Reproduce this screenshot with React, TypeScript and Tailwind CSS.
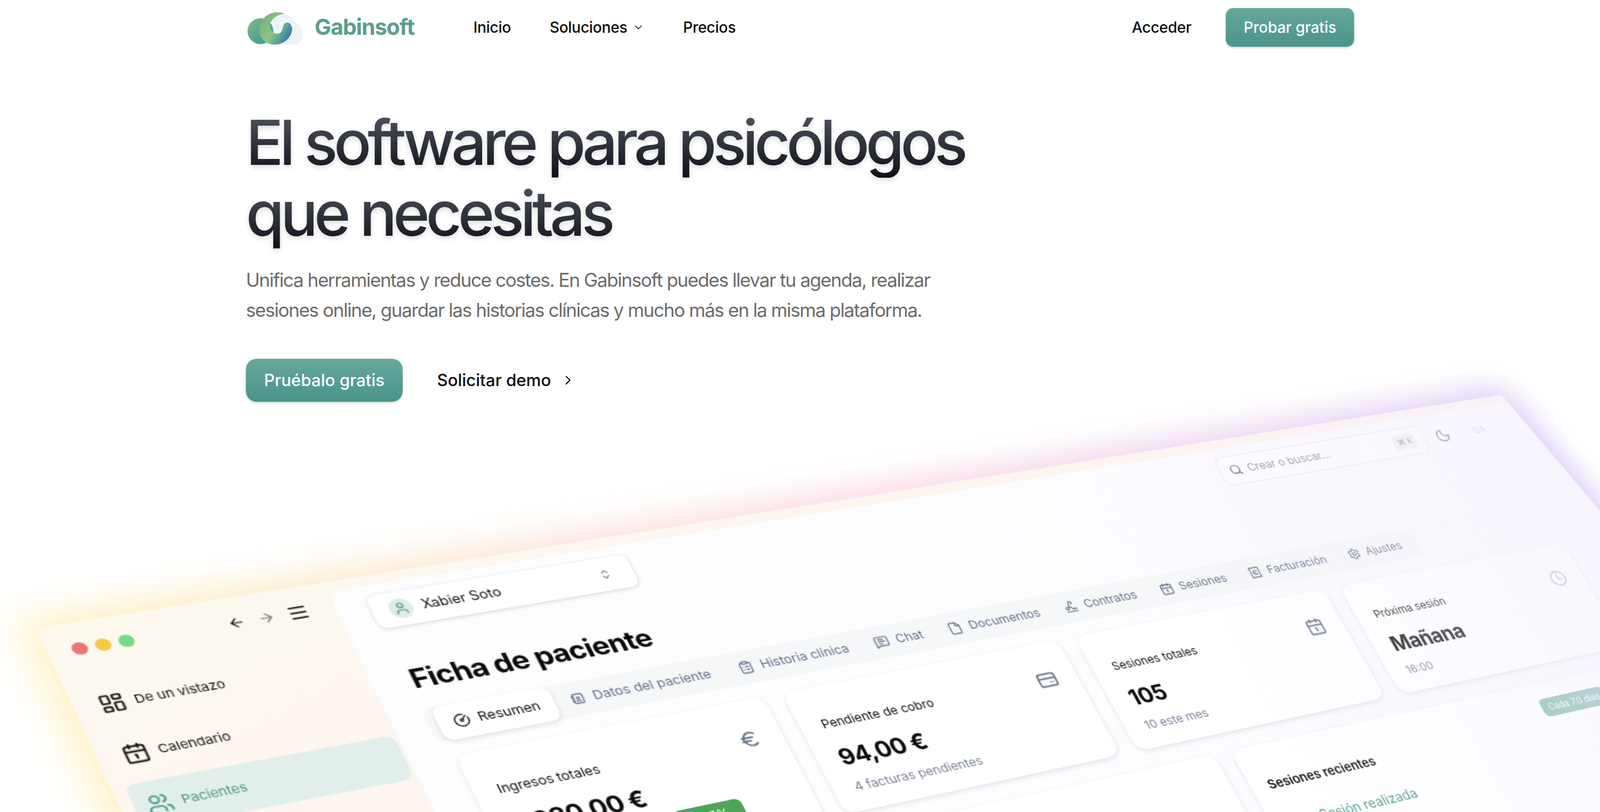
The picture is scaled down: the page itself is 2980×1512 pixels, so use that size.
import { ReactNode } from "react";
import {
  ArrowLeft,
  ArrowRight,
  Calendar1,
  ChevronDown,
  ChevronRight,
  ChevronsUpDown,
  CircleGauge,
  ClipboardList,
  Clock,
  Euro,
  File,
  LayoutDashboard,
  Menu,
  MessageSquareText,
  Moon,
  ReceiptEuro,
  Search,
  Settings,
  Signature,
  User,
  Users,
} from "lucide-react";
import { TbAddressBook } from "react-icons/tb";

const FONT = "font-['Inter','Liberation_Sans',sans-serif]";

// size of the app window before it gets tilted
const WIN_W = 1440;
const WIN_H = 376;

// where the corners of that rectangle land on the page
const CORNERS = [
  [68, 1170],
  [2796, 735],
  [3126, 1282],
  [408, 1900],
];

function perspectiveMatrix(w: number, h: number, pts: number[][]) {
  const [[x0, y0], [x1, y1], [x2, y2], [x3, y3]] = pts;
  const dx1 = x1 - x2;
  const dx2 = x3 - x2;
  const sx = x0 - x1 + x2 - x3;
  const dy1 = y1 - y2;
  const dy2 = y3 - y2;
  const sy = y0 - y1 + y2 - y3;
  const den = dx1 * dy2 - dx2 * dy1;
  const g = (sx * dy2 - dx2 * sy) / den;
  const k = (dx1 * sy - sx * dy1) / den;
  const a = x1 - x0 + g * x1;
  const b = x3 - x0 + k * x3;
  const d = y1 - y0 + g * y1;
  const e = y3 - y0 + k * y3;
  return `matrix3d(${a / w},${d / w},0,${g / w},${b / h},${e / h},0,${k / h},0,0,1,0,${x0},${y0},0,1)`;
}

function Logo() {
  return (
    <svg viewBox="0 0 130 80" className="h-[80px] w-[130px]">
      <defs>
        <linearGradient id="lobe" x1="0" y1="0" x2="1" y2="1">
          <stop offset="0" stopColor="#86b67f" />
          <stop offset="1" stopColor="#2f9aa3" />
        </linearGradient>
        <linearGradient id="swirl" x1="0" y1="0" x2="1" y2="0.6">
          <stop offset="0" stopColor="#6cab84" />
          <stop offset="0.55" stopColor="#93c486" />
          <stop offset="0.8" stopColor="#5aa596" />
          <stop offset="1" stopColor="#3c78b4" />
        </linearGradient>
      </defs>
      <path
        d="M30 72 C14 70 12 30 32 22 L80 14 C92 18 100 26 102 33 C118 36 120 70 100 72 Z"
        fill="#eef4f5"
      />
      <circle cx="35" cy="47" r="24" fill="url(#lobe)" />
      <path
        d="M80 14 C58 6 33 20 33 45 C33 62 47 72 62 72 C78 72 93 60 94 43 C94 33 86 28 80 33 C75 38 78 46 72 50 C65 55 52 49 53 36 C54 24 66 17 80 14 Z"
        fill="url(#swirl)"
      />
    </svg>
  );
}

// card with a band on top and two dots, the picture has no exact match in lucide
function BillingIcon() {
  return (
    <svg
      viewBox="0 0 24 24"
      fill="none"
      stroke="currentColor"
      strokeWidth="2"
      strokeLinecap="round"
      className="h-[20px] w-[20px]"
    >
      <rect x="2" y="4" width="20" height="16" rx="3" />
      <path d="M2 10h20M15 15h.01M18 15h.01" />
    </svg>
  );
}

function HeroLine({ children }: { children: ReactNode }) {
  return (
    <span className="block w-fit bg-gradient-to-b from-[#565c68] to-[#0f1118] bg-clip-text pr-2 text-transparent">
      {children}
    </span>
  );
}

function SideItem({
  icon,
  label,
  active,
}: {
  icon: ReactNode;
  label: string;
  active?: boolean;
}) {
  return (
    <div
      className={`flex h-[44px] items-center gap-[7px] rounded-lg pl-[9px] text-[11px] ${
        active ? "bg-[#e2eeea] text-[#4f9a8b]" : "text-[#111]"
      }`}
    >
      {icon}
      <span>{label}</span>
    </div>
  );
}

function Tab({ icon, label }: { icon: ReactNode; label: string }) {
  return (
    <div className="flex items-center gap-[7px] px-[12.75px] text-[12.1px] text-[#66728a]">
      {icon}
      <span>{label}</span>
    </div>
  );
}

function StatCard({
  title,
  value,
  sub,
  icon,
  badge,
}: {
  title: string;
  value: string;
  sub: string;
  icon: ReactNode;
  badge?: string;
}) {
  return (
    <div className="relative h-[130px] rounded-xl bg-white px-[20px] pt-[31px] shadow-[0_2px_5px_rgba(40,40,70,0.12)]">
      <div className="absolute top-[29px] right-[20px] text-[#66728a]">{icon}</div>
      <div className="text-[11.7px] leading-[16px] text-[#111]">{title}</div>
      <div className="mt-[14px] text-[22.5px] leading-[28px] font-bold tracking-tight text-[#0c0c0c]">
        {value}
      </div>
      <div className="mt-[8px] text-[12px] leading-[18px] text-[#7b8598]">{sub}</div>
      {badge && (
        <span className="absolute top-[93px] right-[64px] rounded-md bg-[#4ea45b] px-[14px] py-[3px] text-[11px] font-medium text-white">
          {badge}
        </span>
      )}
    </div>
  );
}

function AppWindow() {
  const tabIcon = "h-[14px] w-[14px]";
  return (
    <div
      className="absolute top-0 left-0 h-[520px] w-[1549px] origin-top-left"
      style={{ transform: perspectiveMatrix(WIN_W, WIN_H, CORNERS) }}
    >
      {/* glow behind the window */}
      <div className="absolute -inset-[9px] opacity-60 blur-[18px]">
        <div className="h-full w-full bg-gradient-to-r from-[#ffe68f] via-[#f7b9d2] to-[#b9a6f5] [clip-path:polygon(0_0,1458px_0,1567px_100%,0_100%)]" />
      </div>

      {/* the right side of the panel runs out at a slant */}
      <div className="relative flex h-full overflow-hidden rounded-lg bg-gradient-to-br from-[#fdf9ef] via-[#fdf3f0] to-[#faeef6] [clip-path:polygon(0_0,1440px_0,100%_100%,0_100%)]">
        <aside className="flex w-[227px] shrink-0 flex-col pr-[3px] pl-[10px]">
          <div className="flex h-[50px] items-center pl-[8px]">
            <span className="h-[12px] w-[12px] rounded-full bg-[#ec7676]" />
            <span className="ml-[6px] h-[12px] w-[12px] rounded-full bg-[#f4ca45]" />
            <span className="ml-[6px] h-[12px] w-[12px] rounded-full bg-[#72da85]" />
            <ArrowLeft className="ml-[74px] h-[14px] w-[14px] text-[#111]" />
            <ArrowRight className="ml-[10px] h-[14px] w-[14px] text-[#777]" />
            <Menu className="ml-[10px] h-[18px] w-[18px] text-[#111]" />
          </div>
          <nav className="mt-[8px] flex flex-col gap-[5px]">
            <SideItem
              label="De un vistazo"
              icon={<LayoutDashboard className="h-[20px] w-[20px]" strokeWidth={2} />}
            />
            <SideItem
              label="Calendario"
              icon={<Calendar1 className="h-[20px] w-[20px]" strokeWidth={2} />}
            />
            <SideItem
              active
              label="Pacientes"
              icon={<Users className="h-[20px] w-[20px]" strokeWidth={2} />}
            />
          </nav>
        </aside>

        <main className="mt-[10px] flex-1 rounded-tl-2xl bg-gradient-to-r from-[#fefdfe] to-[#fbfaff] pt-[10px] pr-[167px] pl-[27px]">
          <div className="flex items-center">
            <div className="flex h-[34px] w-[228px] items-center gap-[8px] rounded-lg bg-white pr-[19px] pl-[14px] text-[12.5px] text-[#111] shadow-[0_1px_4px_rgba(40,40,70,0.2)]">
              <span className="flex h-[20px] w-[20px] items-center justify-center rounded-full bg-[#dcece7]">
                <User className="h-[14px] w-[14px] text-[#4f9a8b]" />
              </span>
              <span>Xabier Soto</span>
              <ChevronsUpDown className="ml-auto h-[12px] w-[12px] text-[#667]" />
            </div>
            <div className="ml-auto flex h-[32px] w-[240px] items-center gap-[6px] rounded-lg bg-white/60 px-[10px] text-[12.2px] text-[#8a8f9c] shadow-[0_0_2px_rgba(40,40,70,0.25)]">
              <Search className="h-[14px] w-[14px] text-[#555]" />
              <span>Crear o buscar...</span>
              <span className="ml-auto rounded bg-[#f0f0f4] px-[5px] py-[2px] text-[9px]">⌘ K</span>
            </div>
            <Moon className="ml-[14px] h-[18px] w-[18px] text-[#777]" />
            <span className="mr-[-16px] ml-[28px] text-[11px] text-[#c9cad4]">GA</span>
          </div>

          <h2 className="mt-[37px] ml-[4px] text-[25.7px] leading-[32px] font-bold tracking-tight text-[#0b0b0b]">
            Ficha de paciente
          </h2>

          <div className="mt-[14px] flex h-[34px] w-fit items-center rounded-lg bg-[#f5f7f9] pr-[6px] pl-[8px]">
            <div className="flex h-full items-center gap-[7px] rounded-lg bg-white px-[13px] text-[12.1px] text-[#111] shadow-[0_2px_5px_rgba(40,40,70,0.14)]">
              <CircleGauge className={tabIcon} />
              Resumen
            </div>
            <Tab label="Datos del paciente" icon={<TbAddressBook className={tabIcon} />} />
            <Tab label="Historia clínica" icon={<ClipboardList className={tabIcon} />} />
            <Tab label="Chat" icon={<MessageSquareText className={tabIcon} />} />
            <Tab label="Documentos" icon={<File className={tabIcon} />} />
            <Tab label="Contratos" icon={<Signature className={tabIcon} />} />
            <Tab label="Sesiones" icon={<Calendar1 className={tabIcon} />} />
            <Tab label="Facturación" icon={<ReceiptEuro className={tabIcon} />} />
            <Tab label="Ajustes" icon={<Settings className={tabIcon} />} />
          </div>

          <div className="mt-[15px] mr-[-27px] ml-[9px] grid grid-cols-4 gap-[18px]">
            <StatCard
              title="Ingresos totales"
              value="1.380,00 €"
              sub="Este mes"
              badge="+25%"
              icon={<Euro className="h-[20px] w-[20px]" />}
            />
            <StatCard
              title="Pendiente de cobro"
              value="94,00 €"
              sub="4 facturas pendientes"
              icon={<BillingIcon />}
            />
            <StatCard
              title="Sesiones totales"
              value="105"
              sub="10 este mes"
              icon={<Calendar1 className="h-[20px] w-[20px]" />}
            />
            <StatCard
              title="Próxima sesión"
              value="Mañana"
              sub="16:00"
              icon={<Clock className="h-[20px] w-[20px] text-[#aeb2c0]" />}
            />
          </div>

          <div className="mt-[20px] mr-[-27px] ml-[9px] flex gap-[18px]">
            <div className="h-[180px] w-[652px] shrink-0 rounded-xl bg-white shadow-[0_2px_5px_rgba(40,40,70,0.12)]" />
            <div className="relative h-[180px] flex-1 rounded-xl bg-white px-[18px] pt-[34px] shadow-[0_2px_5px_rgba(40,40,70,0.12)]">
              <div className="text-[13px] font-semibold text-[#0b0b0b]">Sesiones recientes</div>
              <div className="mt-[21px] ml-[34px] text-[14px] text-[#4f9a8b]">Sesión realizada</div>
              <span className="absolute top-[18px] right-[54px] rounded-md bg-[#7fb6aa] px-[8px] py-[3px] text-[10px] text-white">
                Cada 7.0 días
              </span>
            </div>
          </div>
        </main>

        {/* the far side of the window fades out */}
        <div className="pointer-events-none absolute inset-0 bg-gradient-to-r from-transparent from-62% to-[#f5f1fd]/70" />
      </div>
    </div>
  );
}

export default function App() {
  return (
    <div className={`relative h-[1512px] overflow-hidden bg-white ${FONT}`}>
      <div className="mx-auto w-[2064px]">
        <header className="flex h-[102px] items-center">
          <div className="-ml-[8px] flex items-center">
            <Logo />
            <span className="ml-[6px] text-[41px] font-bold tracking-tight text-[#5a9e8f]">
              Gabinsoft
            </span>
          </div>
          <nav className="ml-[110px] flex items-center gap-[72px] text-[28px] font-medium tracking-[-0.01em] text-[#0b0b0b]">
            <a>Inicio</a>
            <a className="flex items-center gap-[10px]">
              Soluciones
              <ChevronDown className="h-[22px] w-[22px]" strokeWidth={1.5} />
            </a>
            <a>Precios</a>
          </nav>
          <div className="ml-auto flex items-center gap-[64px]">
            <a className="text-[28px] font-medium tracking-[-0.01em] text-[#0b0b0b]">Acceder</a>
            <button className="h-[72px] w-[239px] rounded-[14px] bg-gradient-to-b from-[#66a89c] to-[#4a9488] text-[28px] font-medium text-white shadow-[0_2px_4px_rgba(0,0,0,0.2)]">
              Probar gratis
            </button>
          </div>
        </header>

        <section className="pt-[97px]">
          <h1 className="text-[116px] leading-[132px] font-medium tracking-[-0.062em] drop-shadow-[0_4px_5px_rgba(0,0,0,0.14)]">
            <HeroLine>El software para psicólogos</HeroLine>
            <HeroLine>que necesitas</HeroLine>
          </h1>
          <p className="mt-[30px] w-[1340px] text-[35px] leading-[56px] tracking-[-0.042em] text-[#6b6b6b]">
            Unifica herramientas y reduce costes. En Gabinsoft puedes llevar tu agenda, realizar
            sesiones online, guardar las historias clínicas y mucho más en la misma plataforma.
          </p>
          <div className="mt-[63px] flex items-center">
            <button className="h-[80px] w-[292px] rounded-[20px] bg-gradient-to-b from-[#66a89c] to-[#4a9488] text-[31px] font-medium text-white shadow-[0_2px_4px_rgba(0,0,0,0.2)]">
              Pruébalo gratis
            </button>
            <a className="ml-[64px] flex items-center gap-[18px] text-[31px] font-medium text-[#0b0b0b]">
              Solicitar demo
              <ChevronRight className="h-[28px] w-[28px]" strokeWidth={1.75} />
            </a>
          </div>
        </section>
      </div>

      <AppWindow />
    </div>
  );
}
